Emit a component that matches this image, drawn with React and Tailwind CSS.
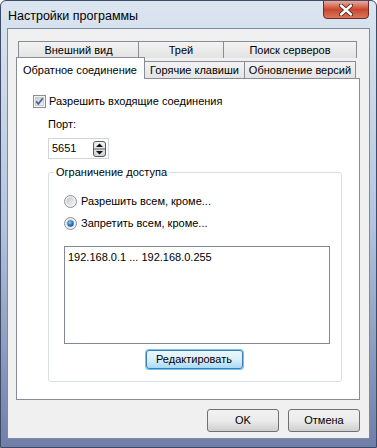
import React from 'react';

const font = { fontFamily: '"Liberation Sans", Arial, sans-serif' };

const CheckBox = () => (
  <svg width="13" height="13" viewBox="0 0 13 13">
    <defs>
      <linearGradient id="cbg" x1="0" y1="0" x2="1" y2="1">
        <stop offset="0" stopColor="#c9ccd1" />
        <stop offset="1" stopColor="#f4f4f5" />
      </linearGradient>
    </defs>
    <rect x="0.5" y="0.5" width="12" height="12" fill="#f4f4f4" stroke="#8e8f8f" />
    <rect x="2.5" y="2.5" width="8" height="8" fill="url(#cbg)" stroke="#c8cbd0" />
    <path d="M3.2 6.4 L5.4 9 L9.8 3.2" fill="none" stroke="#4a5f97" strokeWidth="1.7" />
  </svg>
);

const Radio = ({ checked }) => (
  <svg width="13" height="13" viewBox="0 0 13 13">
    <defs>
      <linearGradient id="rbg" x1="0" y1="0" x2="1" y2="1">
        <stop offset="0" stopColor="#c2c5ca" />
        <stop offset="1" stopColor="#f7f7f7" />
      </linearGradient>
      <radialGradient id="rdot" cx="0.4" cy="0.35" r="0.7">
        <stop offset="0" stopColor="#8fd0f5" />
        <stop offset="0.5" stopColor="#2f83c6" />
        <stop offset="1" stopColor="#134a86" />
      </radialGradient>
    </defs>
    <circle cx="6.5" cy="6.5" r="6" fill="#f2f2f2" stroke="#8e8f8f" />
    <circle cx="6.5" cy="6.5" r="4.2" fill="url(#rbg)" />
    {checked && <circle cx="6.5" cy="6.5" r="3.2" fill="url(#rdot)" />}
  </svg>
);

const Spin = () => (
  <svg width="13" height="16" viewBox="0 0 13 16">
    <defs>
      <linearGradient id="spg" x1="0" y1="0" x2="0" y2="1">
        <stop offset="0" stopColor="#f4f4f4" />
        <stop offset="1" stopColor="#d2d2d2" />
      </linearGradient>
    </defs>
    <rect x="0.5" y="0.5" width="12" height="15" rx="2.5" fill="url(#spg)" stroke="#5a5a5a" />
    <line x1="1" y1="8" x2="12" y2="8" stroke="#5a5a5a" />
    <path d="M3 6 L6.5 2.5 L10 6 Z" fill="#111" />
    <path d="M3 10 L6.5 13.5 L10 10 Z" fill="#111" />
  </svg>
);

const CloseX = () => (
  <svg width="14" height="12" viewBox="0 0 14 12">
    <path d="M2 1.5 L12 10.5 M12 1.5 L2 10.5" stroke="#4a2320" strokeWidth="4.2" strokeLinecap="round" />
    <path d="M2 1.5 L12 10.5 M12 1.5 L2 10.5" stroke="#ffffff" strokeWidth="2.4" strokeLinecap="round" />
  </svg>
);

const BackTab = ({ w, children }) => (
  <div
    className={`${w} h-full flex items-center justify-center whitespace-nowrap border border-b-0 border-[#898c95] -ml-px first:ml-0 bg-gradient-to-b from-[#f3f3f3] to-[#e3e3e3] text-[11px] text-black`}
  >
    {children}
  </div>
);

const DlgButton = ({ children }) => (
  <button className="h-[23px] w-[72px] rounded-[3px] border border-[#707070] bg-gradient-to-b from-[#f2f2f2] via-[#ebebeb] to-[#cfcfcf] text-[11px] text-black">
    {children}
  </button>
);

export default function App() {
  return (
    <div
      style={font}
      className="w-[377px] h-[448px] flex flex-col rounded-t-[6px] border border-[#3d4a68] bg-gradient-to-b from-[#dce6f1] via-[#b3c4dc] to-[#6f7fa8] overflow-hidden"
    >
      {/* Title bar */}
      <div className="h-[27px] flex items-start shrink-0">
        <div className="pl-[7px] pt-[6px] text-[12.5px] text-black">Настройки программы</div>
        <div className="ml-auto mr-[7px] w-[46px] h-[19px] -mt-px flex items-center justify-center rounded-b-[4px] border border-[#6b2d2a] bg-gradient-to-b from-[#e9a99a] via-[#c9462c] to-[#d8765a]">
          <CloseX />
        </div>
      </div>

      {/* Client area */}
      <div className="flex-1 mx-[6px] mb-[8px] bg-[#f0f0f0] border border-[#7b8aa6] flex flex-col">
        <div className="pt-[12px] pl-[8px] pr-[9px]">
          {/* Back row of tabs */}
          <div className="flex h-[17px] mx-[2px]">
            <BackTab w="w-[121px]">Внешний вид</BackTab>
            <BackTab w="w-[86px]">Трей</BackTab>
            <BackTab w="w-[134px]">Поиск серверов</BackTab>
          </div>
          {/* Front row of tabs */}
          <div className="flex h-[20px] items-end relative z-10">
            <div className="w-[129px] h-[22px] -mb-px flex items-start pt-[4px] pl-[6px] whitespace-nowrap bg-white border border-b-0 border-[#898c95] text-[11px] text-black">
              Обратное соединение
            </div>
            <div className="w-[101px] h-[17px] -ml-px flex items-center justify-center whitespace-nowrap border border-b-0 border-[#898c95] bg-gradient-to-b from-[#f3f3f3] to-[#e3e3e3] text-[11px] text-black">
              Горячие клавиши
            </div>
            <div className="w-[112px] h-[17px] -ml-px flex items-center justify-center whitespace-nowrap border border-b-0 border-[#898c95] bg-gradient-to-b from-[#f3f3f3] to-[#e3e3e3] text-[11px] text-black">
              Обновление версий
            </div>
          </div>

          {/* Tab page */}
          <div className="h-[322px] bg-white border border-[#898c95] pt-[16px] pl-[16px] pr-[17px] text-[11px] text-black">
            <div className="flex items-center gap-[3px] h-[13px]">
              <CheckBox />
              <span>Разрешить входящие соединения</span>
            </div>
            <div className="pl-[15px] pt-[9px] leading-[14px]">Порт:</div>
            <div className="ml-[15px] mt-[7px] w-[61px] h-[21px] border border-[#d2d6dc] bg-white flex items-center pl-[3px] pr-[2px]">
              <span className="flex-1">5651</span>
              <Spin />
            </div>

            {/* Group box */}
            <div className="relative ml-[15px] mt-[13px] h-[210px] rounded-[3px] border border-[#d5dfe5] px-[15px]">
              <div className="absolute -top-[8px] left-[5px] bg-white px-[2px] leading-[14px]">Ограничение доступа</div>
              <div className="flex items-center gap-[4px] mt-[22px] h-[13px]">
                <Radio />
                <span>Разрешить всем, кроме...</span>
              </div>
              <div className="flex items-center gap-[4px] mt-[9px] h-[13px]">
                <Radio checked />
                <span>Запретить всем, кроме...</span>
              </div>
              <div className="mt-[16px] mr-[-4px] h-[98px] border border-[#828790] bg-white px-[3px] pt-[3px] leading-[14px]">
                192.168.0.1 ... 192.168.0.255
              </div>
              <div className="flex justify-center mt-[6px] pr-[2px]">
                <button className="h-[19px] w-[97px] rounded-[3px] border border-[#3c7fb1] bg-gradient-to-b from-[#eaf6fd] via-[#d9f0fc] to-[#a7d9f5] text-[11px] text-black shadow-[0_0_0_1px_#6cc4f0]">
                  Редактировать
                </button>
              </div>
            </div>
          </div>
        </div>

        {/* Dialog buttons */}
        <div className="flex justify-end gap-[9px] pr-[9px] mt-[9px]">
          <DlgButton>OK</DlgButton>
          <DlgButton>Отмена</DlgButton>
        </div>
      </div>
    </div>
  );
}
